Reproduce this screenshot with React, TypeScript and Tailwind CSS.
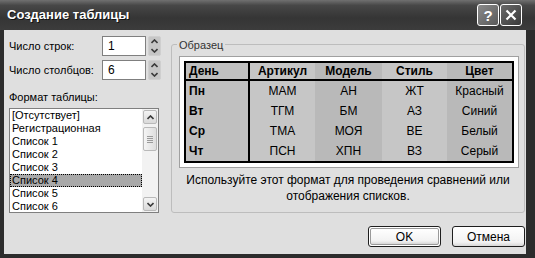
import React from 'react';

const rows = [
  { day: 'Пн', a: 'МАМ', m: 'АН', s: 'ЖТ', c: 'Красный' },
  { day: 'Вт', a: 'ТГМ', m: 'БМ', s: 'АЗ', c: 'Синий' },
  { day: 'Ср', a: 'ТМА', m: 'МОЯ', s: 'ВЕ', c: 'Белый' },
  { day: 'Чт', a: 'ПСН', m: 'ХПН', s: 'ВЗ', c: 'Серый' },
];

const formats = [
  '[Отсутствует]',
  'Регистрационная',
  'Список 1',
  'Список 2',
  'Список 3',
  'Список 4',
  'Список 5',
  'Список 6',
];

const Chevron: React.FC<{ up?: boolean; className?: string }> = ({ up, className }) => (
  <svg width="7" height="5" viewBox="0 0 7 5" className={className}>
    <path
      d={up ? 'M0.5 4 L3.5 1 L6.5 4' : 'M0.5 1 L3.5 4 L6.5 1'}
      fill="none"
      stroke="#3a3a3a"
      strokeWidth="1.6"
    />
  </svg>
);

const Spinner: React.FC<{ value: string }> = ({ value }) => (
  <div className="flex items-center gap-[2px]">
    <div className="w-[44px] h-[20px] bg-white border border-[#7f7f7f] flex items-center pl-[5px] text-[12px]">
      {value}
    </div>
    <div className="w-[13px] h-[20px] flex flex-col rounded-[2px] border border-[#cfcfcf] bg-[#c6c6c6] overflow-hidden">
      <div className="flex-1 flex items-center justify-center">
        <Chevron up />
      </div>
      <div className="flex-1 flex items-center justify-center">
        <Chevron />
      </div>
    </div>
  </div>
);

const ScrollBtn: React.FC<{ up?: boolean }> = ({ up }) => (
  <div className="h-[14px] mx-[1px] rounded-[2px] border border-[#b9b9b9] bg-[linear-gradient(to_bottom,#f4f4f4,#d9d9d9)] flex items-center justify-center">
    <Chevron up={up} />
  </div>
);

export default function App() {
  const cell = 'flex items-center justify-center';
  return (
    <div className="w-[535px] h-[258px] flex flex-col bg-[#2c2c2c] text-black text-[12px] font-['Liberation_Sans',Arial,sans-serif] select-none">
      {/* title bar */}
      <div className="h-[30px] shrink-0 flex items-center pl-[7px] pr-[13px] bg-[linear-gradient(to_bottom,#707070,#474747_18%,#353535_60%,#3c3c3c)]">
        <span className="flex-1 text-white font-bold text-[13px] [text-shadow:1px_1px_0_#111]">
          Создание таблицы
        </span>
        <div className="flex gap-[1px]">
          <div className="w-[22px] h-[22px] rounded-[3px] border border-white bg-[linear-gradient(135deg,#8a8a8a,#5a5a5a)] flex items-center justify-center text-white font-bold text-[15px] leading-none">
            ?
          </div>
          <div className="w-[22px] h-[22px] rounded-[3px] border border-white bg-[linear-gradient(135deg,#6a6a6a,#3a3a3a)] flex items-center justify-center">
            <svg width="12" height="12" viewBox="0 0 12 12">
              <path d="M1.5 1.5 L10.5 10.5 M10.5 1.5 L1.5 10.5" stroke="#fff" strokeWidth="2.2" />
            </svg>
          </div>
        </div>
      </div>

      {/* body */}
      <div className="flex-1 ml-[4px] mr-[9px] mb-[4px] bg-[#dfdfdf] flex flex-col pl-[5px] pr-[1px] pt-[6px]">
        <div className="flex items-start">
          {/* left column */}
          <div className="w-[152px] flex flex-col text-[11px]">
            <div className="flex items-center">
              <span className="w-[93px]">Число строк:</span>
              <Spinner value="1" />
            </div>
            <div className="flex items-center mt-[4px]">
              <span className="w-[93px]">Число столбцов:</span>
              <Spinner value="6" />
            </div>
            <div className="mt-[10px] leading-[14px]">Формат таблицы:</div>
            <div className="mt-[4px] w-[150px] h-[105px] border border-[#7f7f7f] bg-white flex">
              <div className="flex-1 flex flex-col">
                {formats.map((f) => (
                  <div
                    key={f}
                    className={
                      f === 'Список 4'
                        ? 'h-[13px] leading-[13px] pl-[2px] bg-[#a9a9a9] outline-1 outline-dotted outline-black -outline-offset-1'
                        : 'h-[13px] leading-[13px] pl-[2px]'
                    }
                  >
                    {f}
                  </div>
                ))}
              </div>
              <div className="w-[16px] bg-[#f2f2f2] flex flex-col py-[1px]">
                <ScrollBtn up />
                <div className="mt-[3px] h-[24px] mx-[1px] rounded-[2px] border border-[#b9b9b9] bg-[linear-gradient(to_right,#f4f4f4,#dedede)] flex flex-col items-center justify-center gap-[1px]">
                  <div className="w-[6px] h-[1px] bg-[#9a9a9a]" />
                  <div className="w-[6px] h-[1px] bg-[#9a9a9a]" />
                  <div className="w-[6px] h-[1px] bg-[#9a9a9a]" />
                  <div className="w-[6px] h-[1px] bg-[#9a9a9a]" />
                </div>
                <div className="flex-1" />
                <ScrollBtn />
              </div>
            </div>
          </div>

          {/* sample group */}
          <div className="relative ml-[10px] mt-[8px] w-[354px] h-[169px] rounded-[3px] border border-[#bdbdbd] flex flex-col">
            <span className="absolute -top-[8px] left-[5px] px-[2px] bg-[#dfdfdf] text-[#333] text-[11px]">Образец</span>
            <div className="ml-[7px] mt-[11px] w-[340px] border border-[#a0a0a0] bg-white p-[4px]">
              <div className="border-2 border-black flex flex-col">
                <div className="flex h-[18px] border-b-2 border-black font-bold">
                  <div className="w-[64px] bg-[#c0c0c0] border-r-2 border-black flex items-center pl-[3px]">День</div>
                  <div className={`w-[65px] bg-[#c6c6c6] ${cell}`}>Артикул</div>
                  <div className={`w-[67px] bg-[#b9b9b9] ${cell}`}>Модель</div>
                  <div className={`w-[65px] bg-[#c6c6c6] ${cell}`}>Стиль</div>
                  <div className={`w-[65px] bg-[#b9b9b9] ${cell}`}>Цвет</div>
                </div>
                {rows.map((r) => (
                  <div key={r.day} className="flex h-[20px]">
                    <div className="w-[64px] bg-[#c0c0c0] border-r-2 border-black flex items-center pl-[3px] font-bold">
                      {r.day}
                    </div>
                    <div className={`w-[65px] bg-[#c6c6c6] ${cell}`}>{r.a}</div>
                    <div className={`w-[67px] bg-[#b9b9b9] ${cell}`}>{r.m}</div>
                    <div className={`w-[65px] bg-[#c6c6c6] ${cell}`}>{r.s}</div>
                    <div className={`w-[65px] bg-[#b9b9b9] ${cell}`}>{r.c}</div>
                  </div>
                ))}
              </div>
            </div>
            <p className="mt-[4px] text-center leading-[16px]">
              Используйте этот формат для проведения сравнений или
              <br />
              отображения списков.
            </p>
          </div>
        </div>

        {/* buttons */}
        <div className="mt-[13px] flex justify-end gap-[11px]">
          <div className="w-[73px] h-[21px] rounded-[3px] border border-[#1e1e1e] bg-white p-[1px]">
            <div className="w-full h-full rounded-[2px] border border-[#9a9a9a] bg-[linear-gradient(to_bottom,#ffffff,#f2f2f2_80%,#d6d6d6)] flex items-center justify-center">
              OK
            </div>
          </div>
          <div className="w-[73px] h-[21px] rounded-[3px] border border-[#1e1e1e] bg-[linear-gradient(to_bottom,#ffffff,#f2f2f2_80%,#d6d6d6)] flex items-center justify-center">
            Отмена
          </div>
        </div>
      </div>
    </div>
  );
}
